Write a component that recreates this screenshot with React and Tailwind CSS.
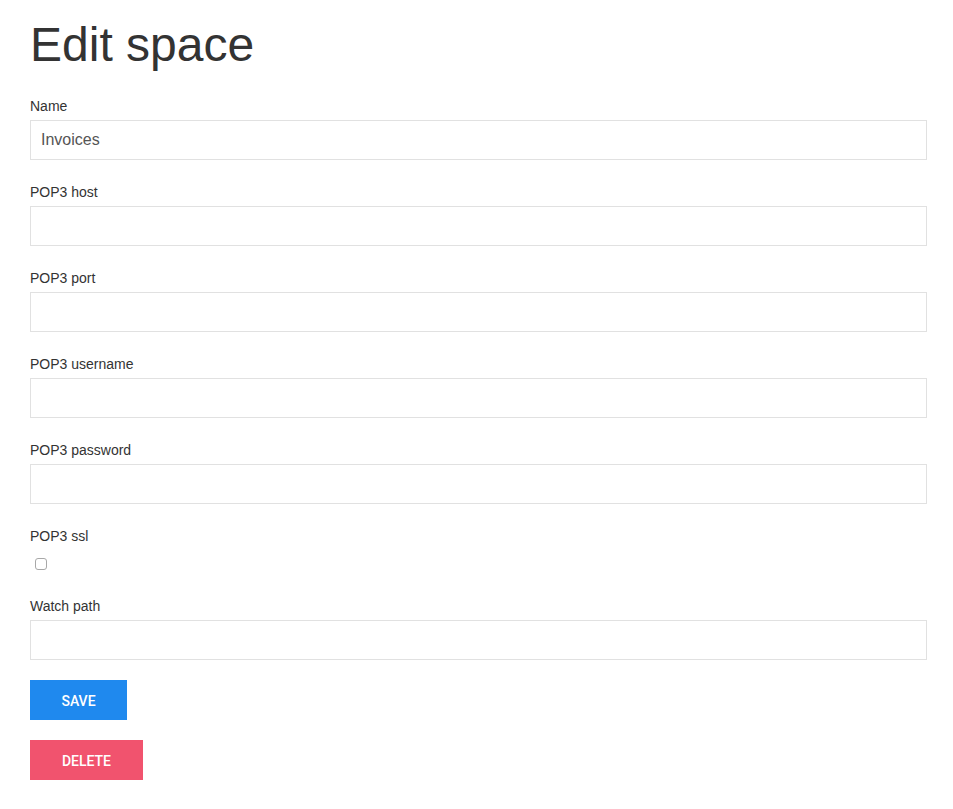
import React, { useState } from "react";

const fields = [
  { key: "name", label: "Name" },
  { key: "host", label: "POP3 host" },
  { key: "port", label: "POP3 port" },
  { key: "username", label: "POP3 username" },
  { key: "password", label: "POP3 password", type: "password" },
];

const Field = ({ label, value, onChange, type = "text" }) => (
  <div className="h-[86px]">
    <label className="block text-[14px] leading-[16px] text-[#333] mb-[6px]">{label}</label>
    <input
      type={type}
      value={value}
      onChange={(e) => onChange(e.target.value)}
      className="block w-full h-[40px] border border-[#e1e1e1] bg-white px-[10px] text-[16px] text-[#555] outline-none"
    />
  </div>
);

const App = () => {
  const [form, setForm] = useState({
    name: "Invoices",
    host: "",
    port: "",
    username: "",
    password: "",
    ssl: false,
    watchPath: "",
  });

  const set = (key) => (value) => setForm((f) => ({ ...f, [key]: value }));

  return (
    <div
      className="min-h-screen bg-white pl-[30px] pr-[26px] pt-[19px] pb-[29px]"
      style={{ fontFamily: '"Liberation Sans", Arial, sans-serif' }}
    >
      <h1 className="h-[79px] text-[48px] leading-[52px] text-[#333] font-normal">Edit space</h1>

      <form onSubmit={(e) => e.preventDefault()}>
        {fields.map((f) => (
          <Field key={f.key} label={f.label} type={f.type} value={form[f.key]} onChange={set(f.key)} />
        ))}

        {/* ssl checkbox */}
        <div className="h-[70px]">
          <label className="block text-[14px] leading-[16px] text-[#333] mb-[6px]">POP3 ssl</label>
          <div className="h-[24px] pt-[8px] pl-[5px]">
            <input
              type="checkbox"
              checked={form.ssl}
              onChange={(e) => set("ssl")(e.target.checked)}
              className="block appearance-none w-[12px] h-[12px] border border-[#a8a8a8] rounded-[3px] bg-white checked:bg-[#1e88e5]"
            />
          </div>
        </div>

        <div className="h-[82px]">
          <label className="block text-[14px] leading-[16px] text-[#333] mb-[6px]">Watch path</label>
          <input
            type="text"
            value={form.watchPath}
            onChange={(e) => set("watchPath")(e.target.value)}
            className="block w-full h-[40px] border border-[#e1e1e1] bg-white px-[10px] text-[16px] text-[#555] outline-none"
          />
        </div>

        <div className="flex flex-col items-start gap-[20px]" style={{ fontFamily: "Roboto, sans-serif" }}>
          <button className="w-[97px] h-[40px] pt-[2px] bg-[#1f89ee] text-white text-[14px] font-medium uppercase">
            Save
          </button>
          <button type="button" className="w-[113px] h-[40px] pt-[2px] bg-[#f1536e] text-white text-[14px] font-medium uppercase">
            Delete
          </button>
        </div>
      </form>
    </div>
  );
};

export default App;
